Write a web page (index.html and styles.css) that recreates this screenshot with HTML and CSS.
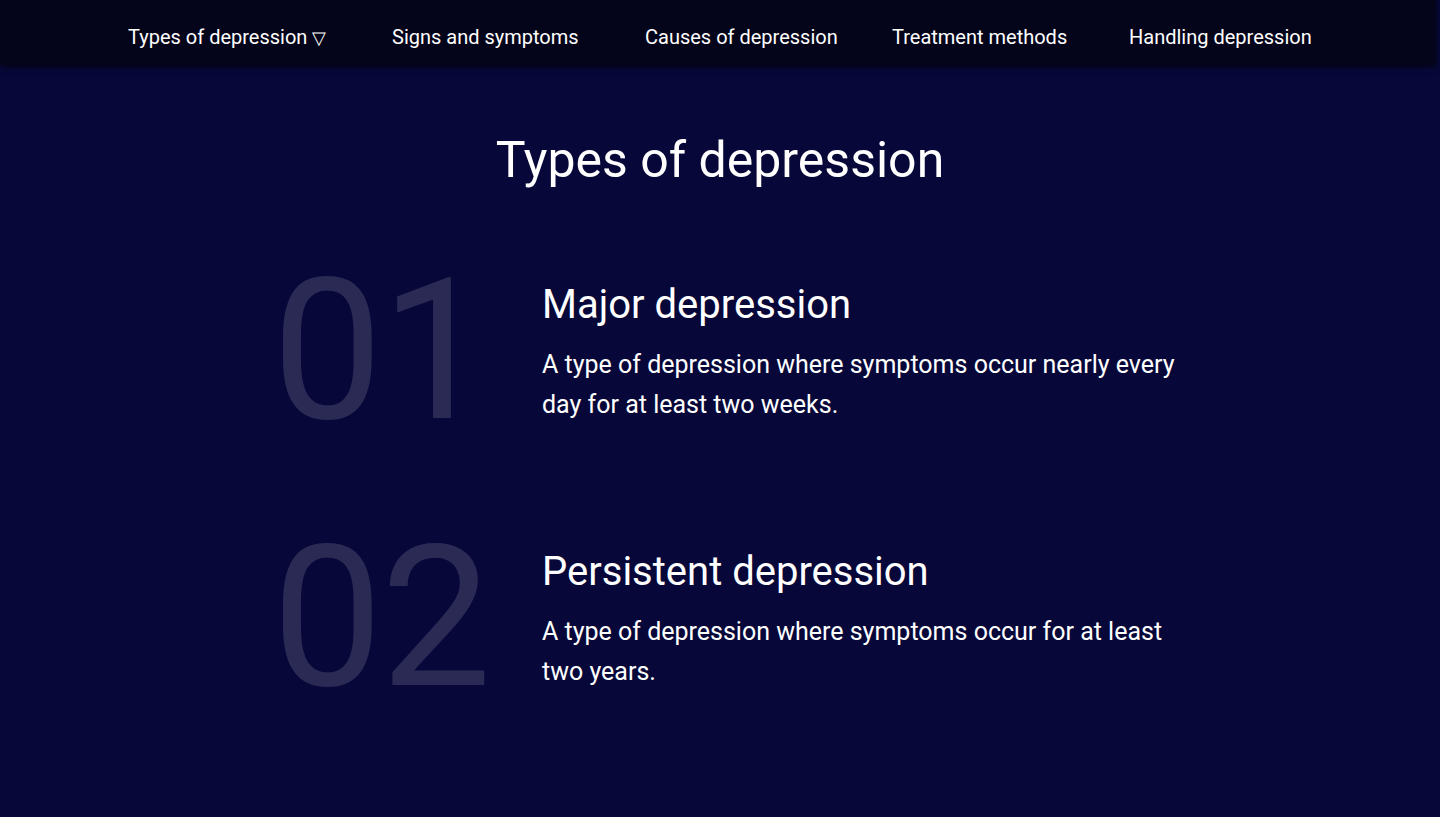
FILE: index.html
```html
<!DOCTYPE html>
<html lang="en">
<head>
<meta charset="utf-8">
<title>Types of depression</title>
<link rel="stylesheet" href="styles.css">
</head>
<body>
<nav class="nav">
  <ul class="nav-list">
    <li class="nav-item nav-item-1">Types of depression <span class="caret">&#9661;</span></li>
    <li class="nav-item nav-item-2">Signs and symptoms</li>
    <li class="nav-item nav-item-3">Causes of depression</li>
    <li class="nav-item nav-item-4">Treatment methods</li>
    <li class="nav-item nav-item-5">Handling depression</li>
  </ul>
</nav>
<main class="main">
  <h1 class="title">Types of depression</h1>
  <section class="types">
    <article class="type">
      <div class="num">01</div>
      <div class="text">
        <h2 class="type-title">Major depression</h2>
        <p class="type-desc">A type of depression where symptoms occur nearly every day for at least two weeks.</p>
      </div>
    </article>
    <article class="type">
      <div class="num">02</div>
      <div class="text">
        <h2 class="type-title">Persistent depression</h2>
        <p class="type-desc">A type of depression where symptoms occur for at least two years.</p>
      </div>
    </article>
  </section>
</main>
</body>
</html>
```
FILE: styles.css
```css
* { box-sizing: border-box; }
html, body { margin: 0; padding: 0; }
body {
  background: #070839;
  color: #ffffff;
  font-family: Roboto, "Liberation Sans", Arial, sans-serif;
  height: 817px;
  overflow: hidden;
}
.nav {
  background: #04041a;
  height: 65px;
  margin-right: 4px;
  box-shadow: 0 2px 6px rgba(0,0,0,0.6);
  position: relative;
  z-index: 1;
}
.nav-list {
  list-style: none;
  margin: 0;
  padding: 9px 0 0 128px;
  display: flex;
  align-items: center;
  height: 100%;
}
.nav-item {
  font-size: 20px;
  font-weight: 400;
  line-height: 1;
  white-space: nowrap;
}
.nav-item-1 { width: 264px; }
.nav-item-2 { width: 253px; }
.nav-item-3 { width: 247px; }
.nav-item-4 { width: 237px; }
.caret { font-size: 18px; }
.main {
  display: flex;
  flex-direction: column;
  align-items: center;
}
.title {
  margin: 67px 0 0;
  font-size: 50px;
  font-weight: 400;
  line-height: 56px;
}
.types {
  width: 940px;
  margin-top: 87px;
  display: flex;
  flex-direction: column;
  gap: 103px;
  padding-left: 22px;
}
.type {
  display: flex;
  align-items: flex-start;
}
.num {
  width: 270px;
  flex: none;
  font-size: 197px;
  font-weight: 400;
  line-height: 176px;
  margin-top: -12px;
  color: rgba(255,255,255,0.14);
  letter-spacing: -2px;
}
.text { padding-top: 4px; }
.type-title {
  margin: 0;
  font-size: 40px;
  font-weight: 400;
  line-height: 52px;
}
.type-desc {
  margin: 14px 0 0;
  font-size: 25px;
  line-height: 40px;
}
```
